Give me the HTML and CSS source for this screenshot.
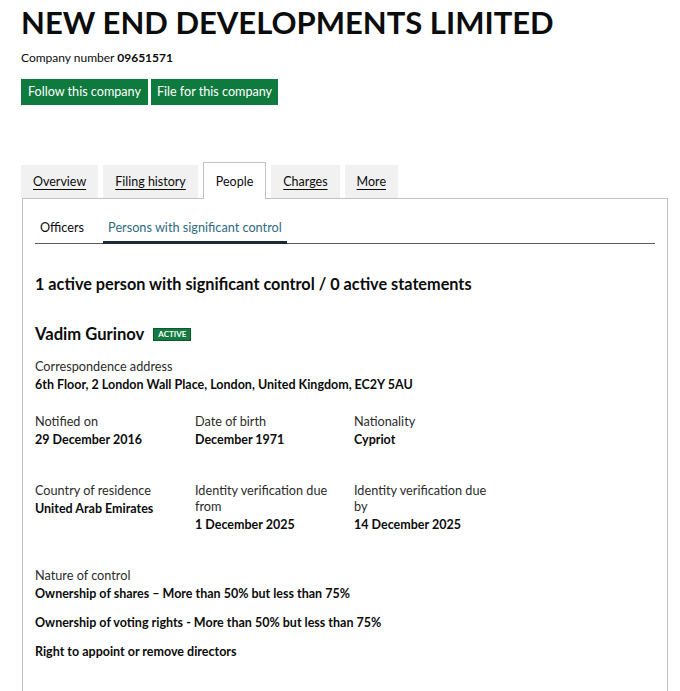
FILE: index.html
```html
<!DOCTYPE html>
<html lang="en">
<head>
<meta charset="utf-8">
<title>NEW END DEVELOPMENTS LIMITED</title>
<link rel="stylesheet" href="styles.css">
</head>
<body>
<main class="page">
  <h1 class="title">NEW END DEVELOPMENTS LIMITED</h1>
  <p class="company-number">Company number <strong>09651571</strong></p>
  <div class="actions">
    <a class="btn" href="#">Follow this company</a>
    <a class="btn" href="#">File for this company</a>
  </div>

  <nav class="tabs">
    <a class="tab" href="#">Overview</a>
    <a class="tab" href="#">Filing history</a>
    <span class="tab tab-active">People</span>
    <a class="tab" href="#">Charges</a>
    <a class="tab" href="#">More</a>
  </nav>

  <section class="panel">
    <div class="subtabs">
      <a class="subtab" href="#">Officers</a>
      <span class="subtab subtab-active">Persons with significant control</span>
    </div>

    <h2 class="summary">1 active person with significant control / 0 active statements</h2>

    <div class="person">
      <h3 class="name">Vadim Gurinov <span class="badge">ACTIVE</span></h3>
      <div class="field address">
        <div class="label">Correspondence address</div>
        <div class="value">6th Floor, 2 London Wall Place, London, United Kingdom, EC2Y 5AU</div>
      </div>

      <div class="grid">
        <div class="field">
          <div class="label">Notified on</div>
          <div class="value">29 December 2016</div>
        </div>
        <div class="field">
          <div class="label">Date of birth</div>
          <div class="value">December 1971</div>
        </div>
        <div class="field">
          <div class="label">Nationality</div>
          <div class="value">Cypriot</div>
        </div>
      </div>

      <div class="grid grid-second">
        <div class="field">
          <div class="label">Country of residence</div>
          <div class="value">United Arab Emirates</div>
        </div>
        <div class="field">
          <div class="label">Identity verification due from</div>
          <div class="value">1 December 2025</div>
        </div>
        <div class="field">
          <div class="label">Identity verification due by</div>
          <div class="value">14 December 2025</div>
        </div>
      </div>

      <div class="field nature">
        <div class="label">Nature of control</div>
        <div class="value">Ownership of shares – More than 50% but less than 75%</div>
        <div class="value value-gap">Ownership of voting rights - More than 50% but less than 75%</div>
        <div class="value value-gap">Right to appoint or remove directors</div>
      </div>
    </div>
  </section>
</main>
</body>
</html>
```

FILE: styles.css
```css
* { box-sizing: border-box; }

html, body {
  margin: 0;
  padding: 0;
  background: #ffffff;
}

body {
  font-family: Lato, "Noto Sans", Arial, sans-serif;
  color: #0b0c0c;
  overflow: hidden;
}

.page {
  padding: 0 13px 0 21px;
}

.title {
  margin: 0;
  padding-top: 5px;
  font-size: 31px;
  line-height: 34px;
  font-weight: 700;
  color: #0b0c0c;
}

.company-number {
  margin: 11px 0 0;
  font-size: 12px;
  line-height: 16px;
  color: #0b0c0c;
}

.company-number strong { font-weight: 700; }

.actions {
  display: flex;
  gap: 3px;
  margin-top: 13px;
}

.btn {
  display: block;
  width: 127px;
  height: 26px;
  line-height: 26px;
  text-align: center;
  background: #0f7a3d;
  color: #ffffff;
  font-size: 12.6px;
  text-decoration: none;
}

.tabs {
  display: flex;
  align-items: flex-end;
  gap: 5px;
  margin-top: 57px;
  position: relative;
  z-index: 1;
}

.tab {
  display: block;
  height: 33px;
  line-height: 33px;
  padding: 0 12px;
  background: #f1f1f1;
  color: #0b0c0c;
  font-size: 12.5px;
  text-decoration: underline;
  text-underline-offset: 3px;
}

.tab-active {
  height: 37px;
  line-height: 37px;
  margin-bottom: -1px;
  background: #ffffff;
  border: 1px solid #c2c2c2;
  border-bottom: none;
  text-decoration: none;
}

.panel {
  margin-left: 1px;
  width: 646px;
  border: 1px solid #c2c2c2;
  border-bottom: none;
  padding: 0 12px 40px 12px;
  min-height: 500px;
}

.subtabs {
  display: flex;
  border-bottom: 1px solid #5a5a5a;
  padding-top: 20px;
}

.subtab {
  display: block;
  padding: 0 5px 6px;
  font-size: 12.7px;
  line-height: 16px;
  color: #0b0c0c;
  text-decoration: none;
}

.subtab:first-child { margin-right: 14px; }

.subtab-active {
  color: #2f6a80;
  border-bottom: 3px solid #1b2a3a;
  margin-bottom: -1px;
}

.summary {
  margin: 30px 0 0;
  font-size: 16.25px;
  line-height: 20px;
  font-weight: 700;
}

.name {
  margin: 30px 0 0;
  font-size: 16.6px;
  line-height: 20px;
  font-weight: 700;
  display: flex;
  align-items: center;
  gap: 9px;
}

.badge {
  display: inline-block;
  background: #137a41;
  color: #ffffff;
  font-size: 8px;
  line-height: 11px;
  padding: 0 4px;
  font-weight: 700;
  border: 1px solid #0c5a2c;
}

.field { font-size: 12.7px; }

.label {
  line-height: 16px;
  color: #2b2b2b;
}

.value {
  font-weight: 700;
  font-size: 12.5px;
  line-height: 18px;
  margin-top: 2px;
}

.address { margin-top: 14px; }

.grid {
  display: grid;
  grid-template-columns: 160px 159px 159px;
  margin-top: 19px;
}

.grid .field { padding-right: 18px; }

.grid-second { margin-top: 33px; }

.nature { margin-top: 33px; }

.value-gap { margin-top: 11px; }
```
